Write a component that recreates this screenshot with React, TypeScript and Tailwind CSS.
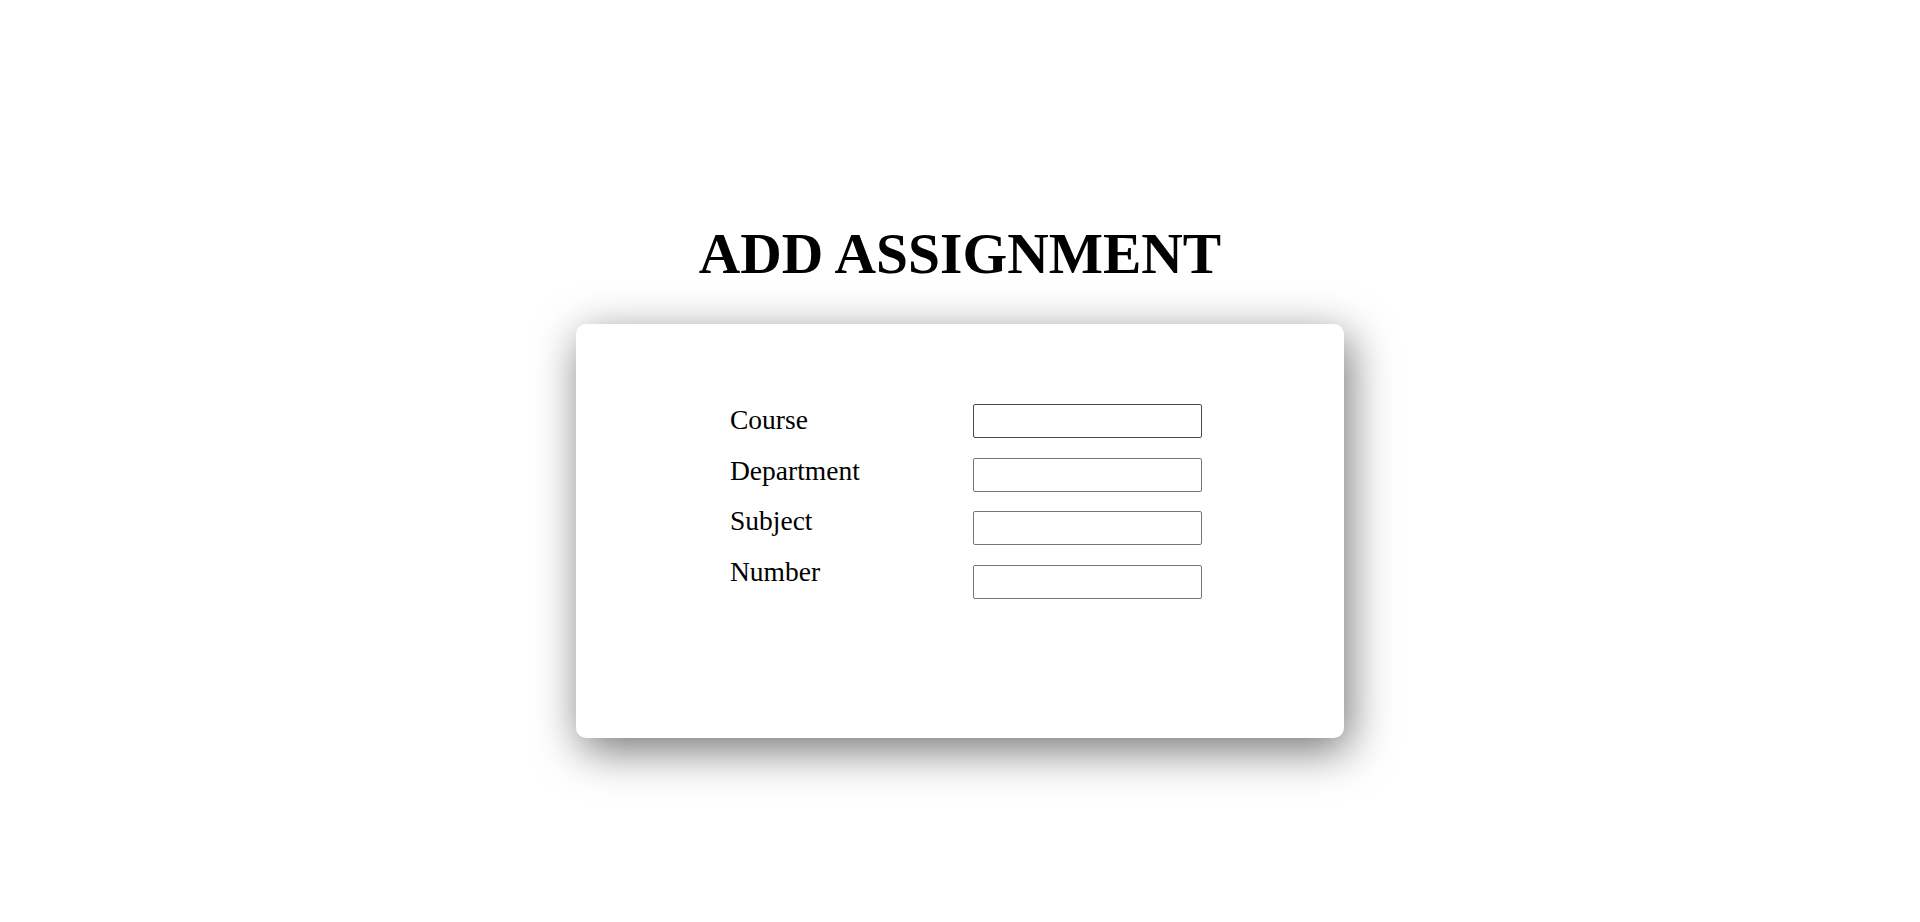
import React from "react";

export default function App() {
  const labels = ["Course", "Department", "Subject", "Number"];
  return (
    <div
      className="w-[1920px] h-[922px] bg-white flex flex-col items-center text-black"
      style={{ fontFamily: '"Liberation Serif", "Times New Roman", serif' }}
    >
      <h1 className="mt-[221px] text-[57.5px] leading-[66px] font-bold">ADD ASSIGNMENT</h1>
      <div className="mt-[37px] w-[768px] h-[414px] rounded-[10px] bg-white shadow-[5px_12px_45px_rgba(0,0,0,0.55)] pt-[80px] pl-[154px] flex">
        <div className="w-[243px] flex flex-col gap-[18.6px]">
          {labels.map((l) => (
            <label key={l} className="text-[27.5px] leading-[32px] h-[32px]">
              {l}
            </label>
          ))}
        </div>
        <div className="flex flex-col gap-[19.7px]">
          {labels.map((l, i) => (
            <input
              key={l}
              type="text"
              className={
                i === 0
                  ? "w-[229px] h-[34px] border border-[#4a4a4a] rounded-[2px] bg-white outline-none"
                  : "w-[229px] h-[34px] border border-[#767676] rounded-[2px] bg-white outline-none"
              }
            />
          ))}
        </div>
      </div>
    </div>
  );
}
